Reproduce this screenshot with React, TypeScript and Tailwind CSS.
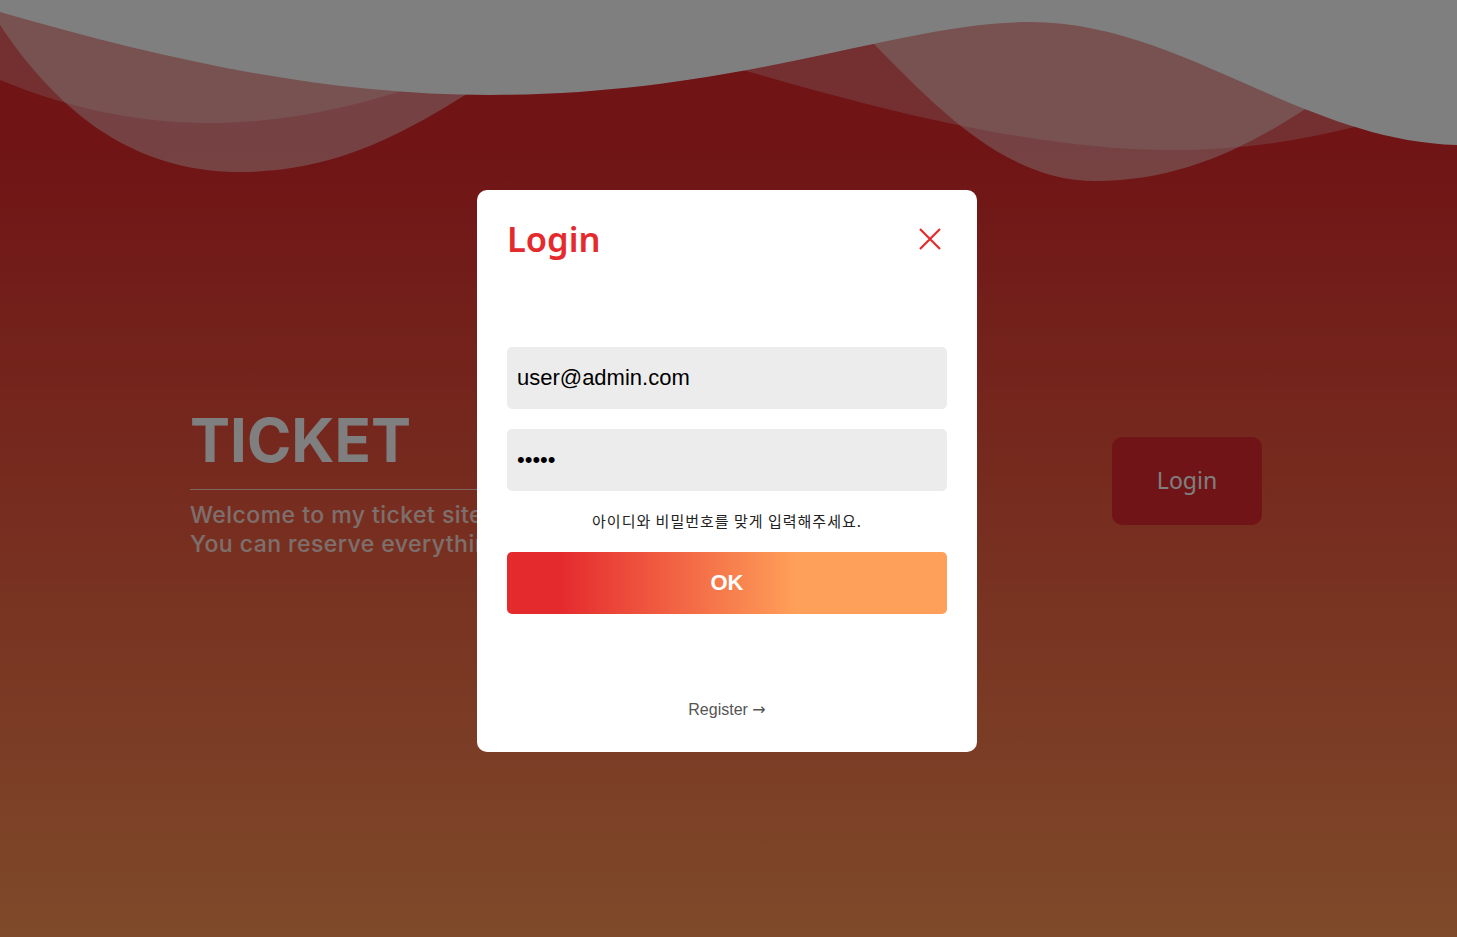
import { useState } from "react";

const Waves = () => (
  <svg
    className="absolute left-0 top-0 h-[200px] w-full"
    viewBox="0 0 1457 200"
    preserveAspectRatio="none"
  >
    <path
      d="M0,0 L0,25 C70,130 150,172 240,172 C360,172 440,110 520,60 L860,30 C930,100 1000,181 1096,181 C1200,181 1280,130 1360,70 L1457,0 Z"
      fill="#ffffff"
      fillOpacity="0.42"
    />
    <path
      d="M0,0 L0,80 C60,105 130,123 209,123 C290,123 360,105 420,85 L700,58 C800,85 1000,150 1171,150 C1260,150 1330,135 1400,115 L1457,90 L1457,0 Z"
      fill="#ffffff"
      fillOpacity="0.26"
    />
    <path
      d="M0,0 L0,12 C160,58 320,95 490,95 C740,95 900,22 1030,22 C1180,22 1300,140 1457,145 L1457,0 Z"
      fill="#ffffff"
    />
  </svg>
);

const LoginModal = () => {
  const [email, setEmail] = useState("user@admin.com");
  const [password, setPassword] = useState("12345");

  return (
    <div className="fixed inset-0 flex items-center justify-center bg-black/50 pr-[3px]">
      <div className="mt-[4px] flex w-[500px] flex-col rounded-[10px] bg-white p-[30px]">
        <div className="flex h-[38px] items-center justify-between">
          <h2 className="pt-[1px] font-['Noto_Sans'] text-[34.5px] font-semibold leading-none text-[#e52a2e]">
            Login
          </h2>
          <button className="mr-[6px]" aria-label="close">
            <svg width="22" height="22" viewBox="0 0 22 22">
              <path
                d="M1 1 L21 21 M21 1 L1 21"
                stroke="#e52a2e"
                strokeWidth="2.2"
                fill="none"
              />
            </svg>
          </button>
        </div>

        <form className="mt-[89px] flex flex-col font-['Liberation_Sans',Arial,sans-serif]">
          <input
            type="email"
            value={email}
            onChange={(e) => setEmail(e.target.value)}
            className="h-[62px] rounded-[5px] bg-[#ececec] pl-[10px] text-[22px] text-black outline-none"
          />
          <input
            type="password"
            value={password}
            onChange={(e) => setPassword(e.target.value)}
            className="mt-[20px] h-[62px] rounded-[5px] bg-[#ececec] pl-[10px] text-[22px] text-black outline-none"
          />
          <p className="mt-[20px] text-center font-['Noto_Sans_CJK_KR',sans-serif] text-[15px] leading-[20px] tracking-[1px] text-[#222]">
            아이디와 비밀번호를 맞게 입력해주세요.
          </p>
          <button
            type="button"
            className="mt-[21px] h-[62px] rounded-[5px] bg-[linear-gradient(90deg,#e52a2e_12%,#ffa05a_66%)] text-[22px] font-bold text-white"
          >
            OK
          </button>
        </form>

        <a className="mt-[84px] cursor-pointer text-center font-['Liberation_Sans',Arial,sans-serif] text-[16px] leading-[24px] text-[#555]">
          Register <span className="font-['DejaVu_Sans',sans-serif]">→</span>
        </a>
      </div>
    </div>
  );
};

export default function App() {
  return (
    <div className="relative min-h-screen overflow-hidden bg-[linear-gradient(180deg,#e0282c_15%,#fe9454_100%)]">
      <Waves />
      <main className="relative flex h-screen items-center justify-between pl-[190px] pr-[195px] pt-[32px]">
        <section className="w-[420px] font-['Inter',sans-serif]">
          <h1 className="border-b border-white/70 pb-[19px] text-[60px] font-bold leading-none text-white">
            TICKET
          </h1>
          <p className="mt-[11px] text-[23px] font-medium leading-[29px] tracking-[0.02em] text-white/80">
            Welcome to my ticket site
            <br />
            You can reserve everything
          </p>
        </section>
        <button className="mb-[8px] h-[88px] w-[150px] rounded-[10px] bg-[#e2282e] font-['Noto_Sans',sans-serif] text-[23px] text-white">
          Login
        </button>
      </main>
      <LoginModal />
    </div>
  );
}
